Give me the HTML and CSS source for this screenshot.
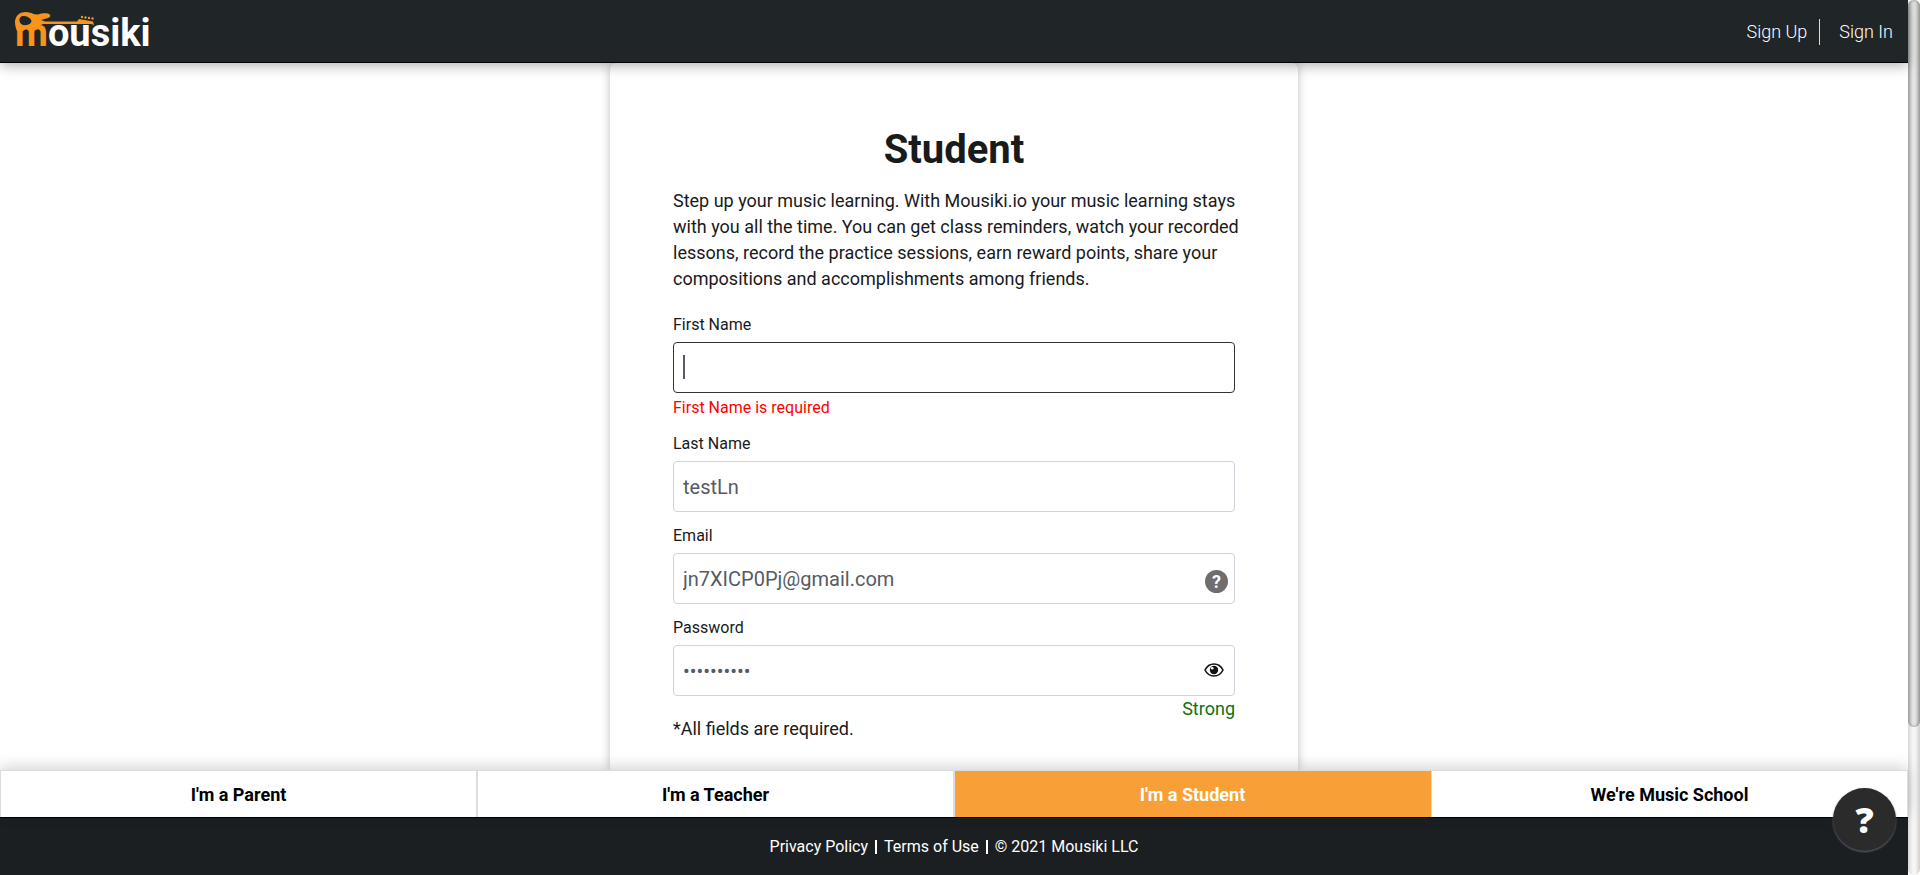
FILE: index.html
```html
<!DOCTYPE html>
<html lang="en">
<head>
<meta charset="utf-8">
<title>Mousiki - Student Sign Up</title>
<link rel="stylesheet" href="styles.css">
</head>
<body>
<div class="window">
  <div class="page">
    <header class="topbar">
      <a class="logo" href="#" aria-label="Mousiki home">
        <span class="logo-m">m</span><span>ousiki</span>
        <svg class="guitar" viewBox="0 0 80 34" aria-hidden="true">
          <path fill="#f7941e" fill-rule="evenodd" d="M2 22C0 18 0 14 0 12C1 6 5 3 11 3C16 3 19 6 23 5.500C27 4 30 4 33 4.500C36 5.500 36 8 33 9L26 11L30 12.500H62L64 10L78 12.500L79 16L76 15L62 15H28L22 18L18 19H12L8 22ZM9 7C5.500 7 4 9 4.500 12C5 15 8 17 12 16C16 15 18 12 15 9.500C13 8 12 7 9 7Z"/>
          <g fill="#f7941e"><circle cx="67" cy="8" r="1.200"/><circle cx="70.500" cy="8.500" r="1.200"/><circle cx="74" cy="9" r="1.200"/><circle cx="77.500" cy="9.500" r="1.200"/></g>
        </svg>
      </a>
      <nav class="account">
        <a href="#">Sign Up</a>
        <a href="#">Sign In</a>
      </nav>
    </header>

    <main class="content">
      <form class="card">
        <h1>Student</h1>
        <p class="intro">Step up your music learning. With Mousiki.io your music learning stays<br>with you all the time. You can get class reminders, watch your recorded<br>lessons, record the practice sessions, earn reward points, share your<br>compositions and accomplishments among friends.</p>
        <div class="field">
          <label for="first">First Name</label>
          <div class="box active"><input id="first" type="text"><span class="caret"></span></div>
          <p class="error">First Name is required</p>
        </div>
        <div class="field">
          <label for="last">Last Name</label>
          <div class="box"><input id="last" type="text" value="testLn"></div>
        </div>
        <div class="field">
          <label for="email">Email</label>
          <div class="box">
            <input id="email" type="email" value="jn7XICP0Pj@gmail.com">
            <button class="hint" type="button" aria-label="Email help">?</button>
          </div>
        </div>
        <div class="field">
          <label for="password">Password</label>
          <div class="box">
            <input id="password" type="password" value="abcdefghij">
            <button class="reveal" type="button" aria-label="Show password">
              <svg viewBox="0 0 20 14" aria-hidden="true">
                <path d="M1 7C5 -1 15 -1 19 7C15 15 5 15 1 7Z" fill="#fff" stroke="#111" stroke-width="1.6"/>
                <circle cx="10" cy="7" r="4.2" fill="#111"/><circle cx="8.2" cy="5.2" r="1.3" fill="#fff"/>
              </svg>
            </button>
          </div>
          <p class="strength">Strong</p>
        </div>
        <p class="note">*All fields are required.</p>
      </form>
    </main>

    <nav class="roles">
      <button type="button">I'm a Parent</button>
      <button type="button">I'm a Teacher</button>
      <button type="button" class="selected">I'm a Student</button>
      <button type="button">We're Music School</button>
    </nav>
    <footer class="footer">
      <a href="#">Privacy Policy</a><span class="bar"></span><a href="#">Terms of Use</a><span class="bar"></span><span>© 2021 Mousiki LLC</span>
    </footer>
    <button class="help" type="button" aria-label="Help">?</button>
  </div>
  <div class="scroll"><div class="thumb"></div></div>
</div>
</body>
</html>
```

FILE: styles.css
```css
* { box-sizing: border-box; }
body { margin: 0; font-family: Roboto, "Liberation Sans", sans-serif; font-size: 16px; color: #181a1b; background: #fff; }
h1, p { margin: 0; }
a { color: inherit; text-decoration: none; }
button { font: inherit; border: 0; padding: 0; cursor: pointer; }
.window { display: flex; height: 100vh; }
.page { position: relative; flex: 1; display: flex; flex-direction: column; min-width: 0; }

.topbar { position: relative; z-index: 2; display: flex; align-items: center; justify-content: space-between; height: 63px; padding: 0 15px; background: #202528; color: #fff; border-bottom: 1px solid #000; box-shadow: 0 3px 12px rgba(0, 0, 0, .3); }
.logo { position: relative; display: flex; font-size: 38px; line-height: 44px; font-weight: 700; padding-top: 4px; }
.logo-m { color: #f7941e; }
.guitar { position: absolute; left: 0; top: 2px; width: 80px; height: 34px; }
.account { display: flex; padding-top: 2px; font-size: 18px; font-weight: 300; line-height: 26px; }
.account a + a { border-left: 1px solid #ddd; margin-left: 12px; padding-left: 19px; }

.content { flex: 1; min-height: 0; overflow: hidden; display: flex; justify-content: center; align-items: stretch; }
.card { width: 688px; padding: 63px 63px 0; box-shadow: 0 0 10px rgba(0, 0, 0, .25); border-radius: 6px 6px 0 0; }
h1 { font-size: 40px; line-height: 48px; font-weight: 700; text-align: center; }
.intro { margin: 14px 0 21px; font-size: 18px; line-height: 26px; white-space: nowrap; }
.field { margin-bottom: 12px; }
.field label { display: block; line-height: 24px; margin-bottom: 5px; }
.box { position: relative; height: 51px; border: 1px solid #ced4da; border-radius: 4px; }
.box.active { border-color: #333; }
.box input { width: 100%; height: 100%; border: 0; outline: 0; background: none; padding: 0 9px; font: inherit; font-size: 20px; color: #555b63; }
.caret { position: absolute; left: 9px; top: 12px; width: 2px; height: 24px; background: #555b63; }
.error { margin-top: 3px; line-height: 24px; color: #f00; }
.hint { position: absolute; right: 6px; top: 16px; width: 23px; height: 23px; border-radius: 50%; background: #6f6d6d; color: #fff; font-size: 18px; line-height: 23px; font-weight: 700; }
.reveal { position: absolute; right: 10px; top: 17px; width: 20px; height: 14px; background: none; }
.reveal svg { display: block; width: 20px; height: 14px; }
.strength { margin-top: 3px; font-size: 18px; line-height: 20px; text-align: right; color: #107010; }
.note { margin-top: -14px; font-size: 18px; line-height: 24px; }

.roles { position: relative; z-index: 1; display: grid; grid-template-columns: repeat(4, 1fr); height: 47px; box-shadow: 0 -3px 14px rgba(0, 0, 0, .18); }
.roles button { background: #fff; border: 1px solid #ddd; border-bottom: 0; font-size: 18px; font-weight: 700; color: #000; }
.roles .selected { background: #f89f37; color: #fff; border-right-color: #f89f37; }
.footer { display: flex; justify-content: center; align-items: center; height: 58px; background: #1b1f22; color: #fff; border-top: 1px solid #000; }
.bar { width: 2px; height: 14px; margin: 0 7px; background: #fff; }
.help { position: absolute; z-index: 3; right: 12px; bottom: 24px; width: 63px; height: 63px; border-radius: 50%; background: #2b2b2b; color: #fff; font-family: "Open Sans", sans-serif; font-size: 36px; font-weight: 800; line-height: 63px; box-shadow: 0 1px 2px #5c6574; }

.scroll { width: 12px; background: linear-gradient(90deg, #d8d8d8, #f6f6f6 40%, #f6f6f6 60%, #d0d0d0); border-radius: 6px; }
.thumb { height: 83.1%; border-radius: 6px; background: linear-gradient(90deg, #a8a8a8, #e4e4e4 40%, #e4e4e4 60%, #a0a0a0); box-shadow: inset 0 0 3px #888; }
```
